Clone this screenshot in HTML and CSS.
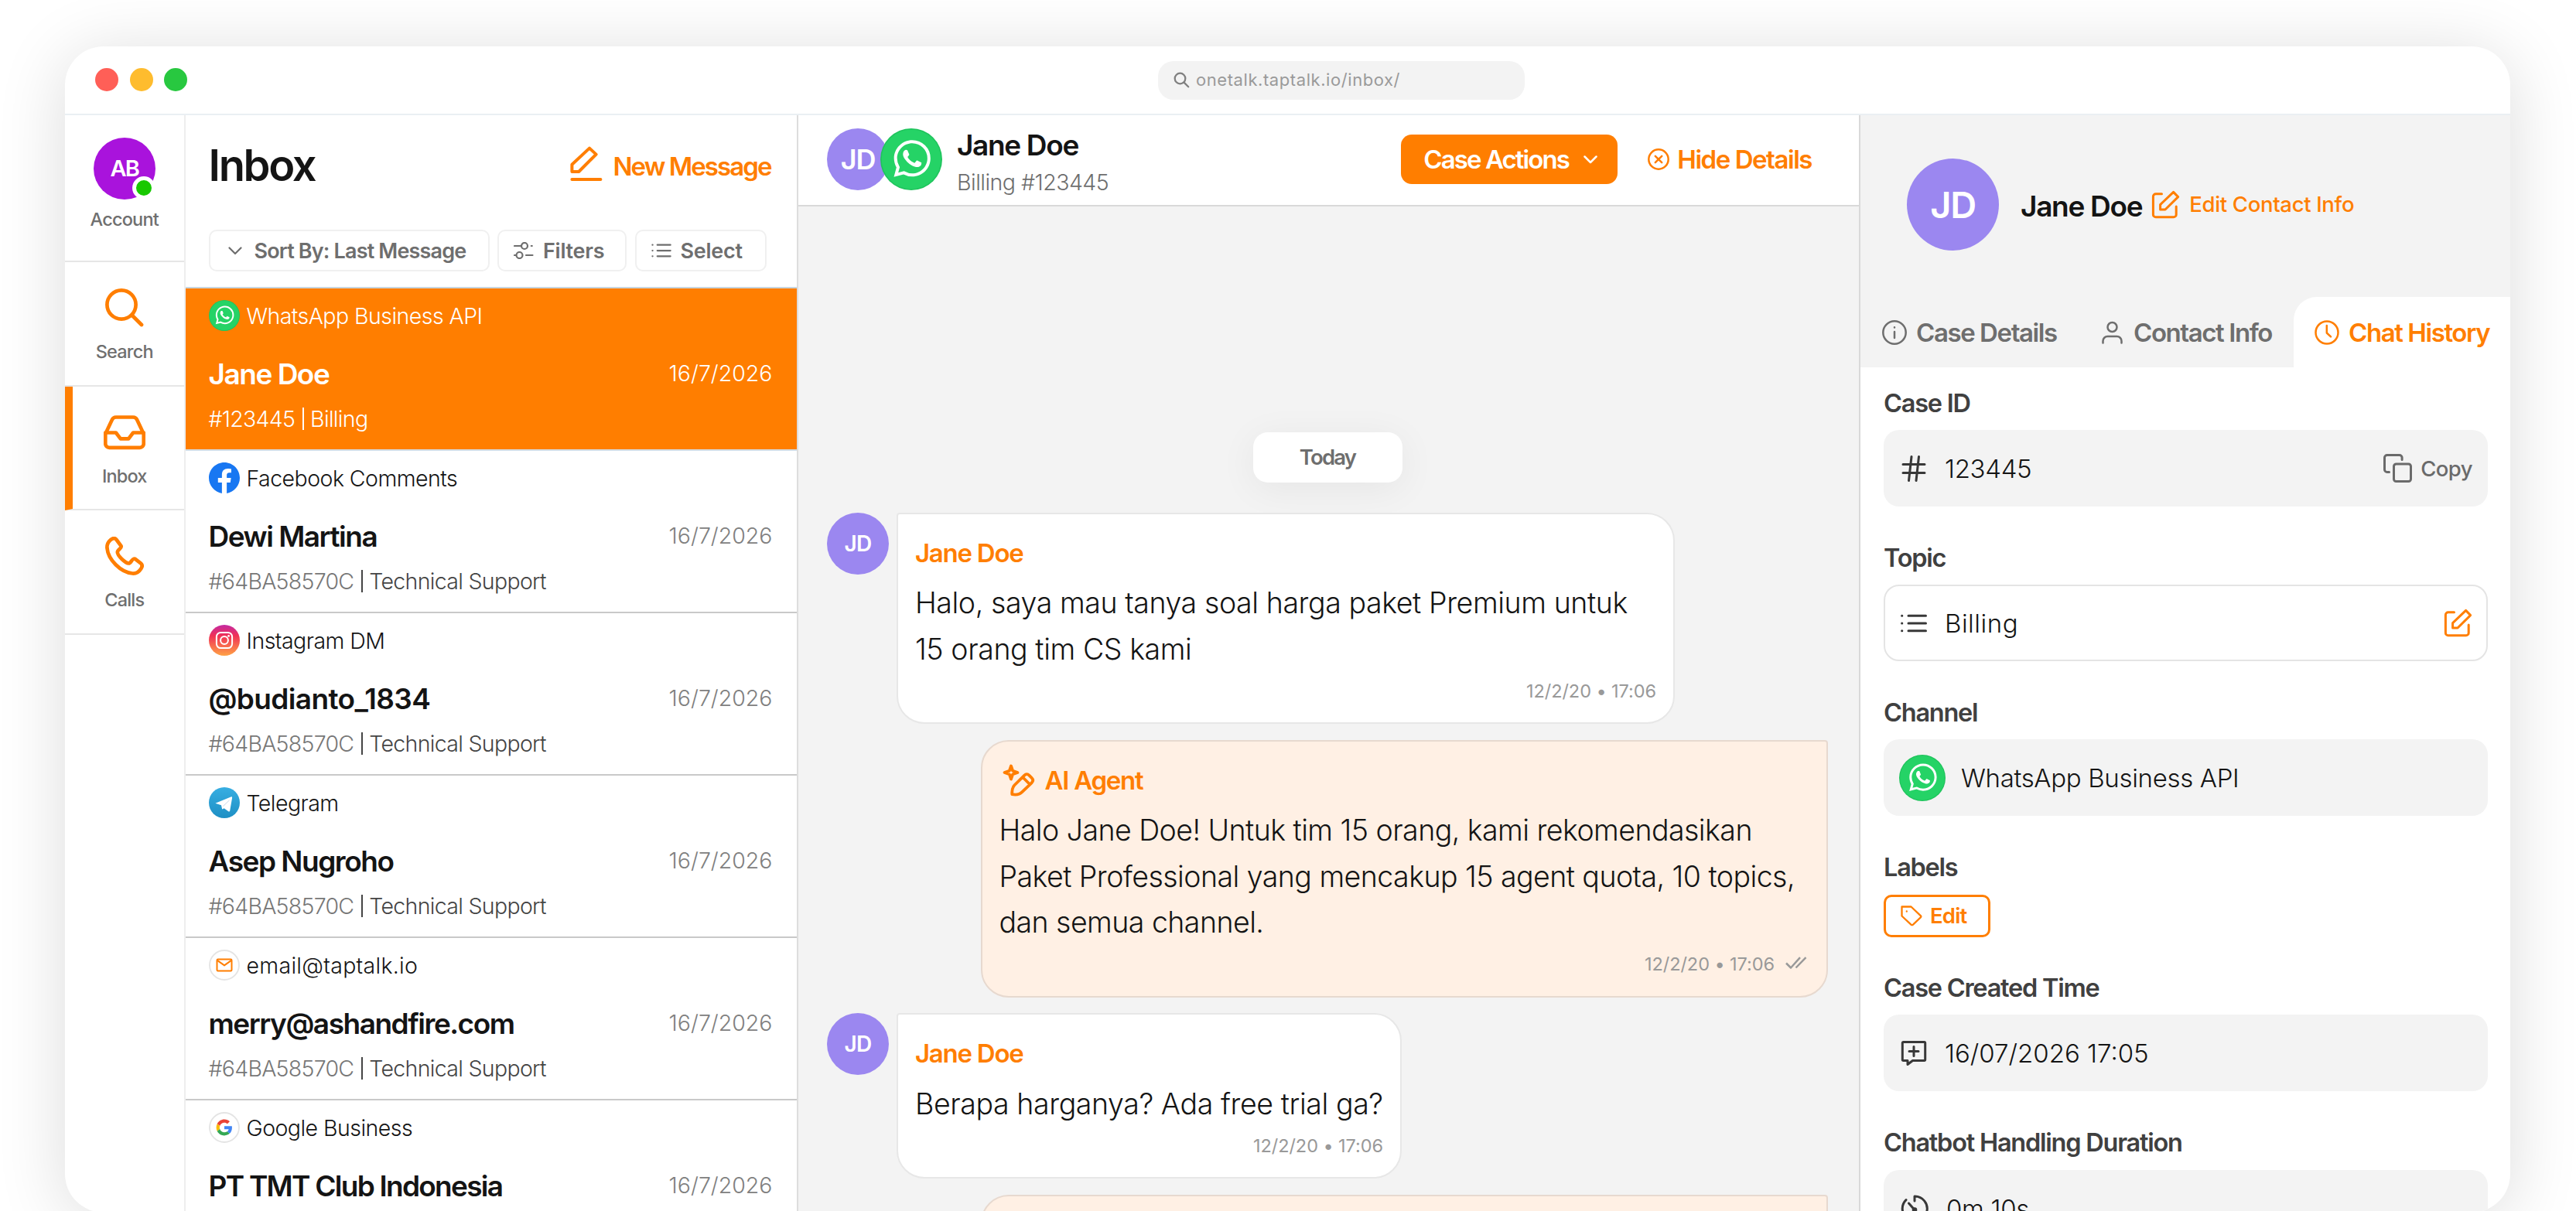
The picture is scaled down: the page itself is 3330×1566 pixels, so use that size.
FILE: index.html
```html
<!DOCTYPE html>
<html lang="en">
  <head>
    <meta charset="utf-8" />
    <meta name="viewport" content="width=device-width, initial-scale=1.0" />
    <title>OneTalk Inbox</title>
    <link rel="stylesheet" href="styles.css">
  </head>

  <body>
    <!-- icon sprite -->
    <svg class="sprite" width="0" height="0">
      <defs>
        <linearGradient id="instaBg" x1="0" y1="0" x2="0" y2="1">
          <stop offset="0" stop-color="#c32aa3" />
          <stop offset="0.35" stop-color="#f03056" />
          <stop offset="1" stop-color="#ffa245" />
        </linearGradient>
        <linearGradient id="teleBg" x1="0" y1="0" x2="0" y2="1">
          <stop offset="0" stop-color="#37aee2" />
          <stop offset="1" stop-color="#1e8fc4" />
        </linearGradient>
      </defs>
      <symbol id="whatsapp" viewBox="0 0 40 40">
        <circle cx="20" cy="20" r="20" fill="#1fc35c" />
        <circle cx="20" cy="20" r="19.2" fill="#25d366" />
        <path transform="translate(8.7 7.6) scale(.99)" fill="#fff" d="M17.472 14.382c-.297-.149-1.758-.867-2.03-.967-.273-.099-.471-.148-.67.15-.197.297-.767.966-.94 1.164-.173.199-.347.223-.644.075-.297-.15-1.255-.463-2.39-1.475-.883-.788-1.48-1.761-1.653-2.059-.173-.297-.018-.458.13-.606.134-.133.298-.347.446-.52.149-.174.198-.298.298-.497.099-.198.05-.371-.025-.52-.075-.149-.669-1.612-.916-2.207-.242-.579-.487-.5-.669-.51-.173-.008-.371-.01-.57-.01-.198 0-.52.074-.792.372-.272.297-1.04 1.016-1.04 2.479 0 1.462 1.065 2.875 1.213 3.074.149.198 2.096 3.2 5.077 4.487.709.306 1.262.489 1.694.625.712.227 1.36.195 1.871.118.571-.085 1.758-.719 2.006-1.413.248-.694.248-1.289.173-1.413-.074-.124-.272-.198-.57-.347m-5.421 7.403h-.004a9.87 9.87 0 01-5.031-1.378l-.361-.214-3.741.982.998-3.648-.235-.374a9.86 9.86 0 01-1.51-5.26c.001-5.45 4.436-9.884 9.888-9.884 2.64 0 5.122 1.03 6.988 2.898a9.825 9.825 0 012.893 6.994c-.003 5.45-4.437 9.884-9.885 9.884m8.413-18.297A11.815 11.815 0 0012.05 0C5.495 0 .16 5.335.157 11.892c0 2.096.547 4.142 1.588 5.945L.057 24l6.305-1.654a11.882 11.882 0 005.683 1.448h.005c6.554 0 11.89-5.335 11.893-11.893a11.821 11.821 0 00-3.48-8.413z" />
      </symbol>
      <symbol id="facebook" viewBox="0 0 24 24">
        <path fill="#1877f2" d="M24 12.073c0-6.627-5.373-12-12-12s-12 5.373-12 12c0 5.99 4.388 10.954 10.125 11.854v-8.385H7.078v-3.47h3.047V9.43c0-3.007 1.792-4.669 4.533-4.669 1.312 0 2.686.235 2.686.235v2.953H15.83c-1.491 0-1.956.925-1.956 1.874v2.25h3.328l-.532 3.47h-2.796v8.385C19.612 23.027 24 18.062 24 12.073z" />
      </symbol>
      <symbol id="instagram" viewBox="0 0 40 40">
        <circle cx="20" cy="20" r="20" fill="url(#instaBg)" />
        <rect x="9.9" y="9.9" width="20.2" height="20.2" rx="5.5" fill="none" stroke="#fff" stroke-width="2" />
        <circle cx="20" cy="20" r="4.9" fill="none" stroke="#fff" stroke-width="2" />
        <circle cx="25.6" cy="14.4" r="1.4" fill="#fff" />
      </symbol>
      <symbol id="telegram" viewBox="0 0 40 40">
        <circle cx="20" cy="20" r="20" fill="url(#teleBg)" />
        <path fill="#fff" d="M8.4 20.8 28.4 12.4q2-.7 1.7 1.3L27.2 30.4q-.4 1.8-2 .8l-5.5-3.9-2.5 1.2-1.2-5.2z" />
        <path d="M18.4 24.6 26.5 16.8" stroke="#c8daea" stroke-width="1" />
      </symbol>
      <symbol id="email" viewBox="0 0 40 40">
        <circle cx="20" cy="20" r="19" fill="#fff" stroke="#e4e4e4" stroke-width="1.8" />
        <g fill="none" stroke="#ff7e00" stroke-width="2" stroke-linejoin="round">
          <rect x="10.5" y="12.5" width="19" height="15" rx="1.2" />
          <path d="m10.5 13.6 9.5 6.8 9.5-6.8" />
        </g>
      </symbol>
      <symbol id="google" viewBox="0 0 40 40">
        <circle cx="20" cy="20" r="19" fill="#fff" stroke="#e4e4e4" stroke-width="1.8" />
        <g transform="translate(9.6 9.6) scale(.433)">
          <path fill="#EA4335" d="M24 9.5c3.54 0 6.71 1.22 9.21 3.6l6.85-6.85C35.9 2.38 30.47 0 24 0 14.62 0 6.51 5.38 2.56 13.22l7.98 6.19C12.43 13.72 17.74 9.5 24 9.5z" />
          <path fill="#4285F4" d="M46.98 24.55c0-1.57-.15-3.09-.38-4.55H24v9.02h12.94c-.58 2.96-2.26 5.48-4.78 7.18l7.73 6c4.51-4.18 7.09-10.36 7.09-17.65z" />
          <path fill="#FBBC05" d="M10.53 28.59c-.48-1.45-.76-2.99-.76-4.59s.27-3.14.76-4.59l-7.98-6.19C.92 16.46 0 20.12 0 24c0 3.88.92 7.54 2.56 10.78l7.97-6.19z" />
          <path fill="#34A853" d="M24 48c6.48 0 11.93-2.13 15.89-5.81l-7.73-6c-2.15 1.45-4.92 2.3-8.16 2.3-6.26 0-11.57-4.22-13.47-9.91l-7.98 6.19C6.51 42.62 14.62 48 24 48z" />
        </g>
      </symbol>
      <symbol id="edit" viewBox="0 0 37 37">
        <path d="M13.5 4.8H5.8a3.4 3.4 0 0 0-3.4 3.4v23.2a3.4 3.4 0 0 0 3.4 3.4h23a3.4 3.4 0 0 0 3.4-3.4V21" />
        <path d="m28.6 2.4 6 6.2L18 25h-6.4v-6.4z" />
      </symbol>
      <symbol id="list" viewBox="0 0 34 24">
        <path d="M10 2.2h22.5M10 12h22.5M10 21.8h22.5M1.6 2.2h.2M1.6 12h.2M1.6 21.8h.2" />
      </symbol>
      <symbol id="chevron" viewBox="0 0 18 11">
        <path d="m1.5 1.5 7.5 7.5 7.5-7.5" />
      </symbol>
    </svg>

    <div class="window">
      <div class="titlebar">
        <div class="dots">
          <span class="dot red"></span>
          <span class="dot yellow"></span>
          <span class="dot green"></span>
        </div>
        <div class="url">
          <svg class="line" width="21" height="21" viewBox="0 0 21 21"><circle cx="8.5" cy="8.5" r="6.8" /><path d="m13.6 13.6 5.6 5.6" /></svg>
          <span>onetalk.taptalk.io/inbox/</span>
        </div>
      </div>

      <div class="main">
        <nav class="sidebar">
          <div class="nav-item account">
            <div class="avatar me">AB<span class="online"></span></div>
            <span>Account</span>
          </div>
          <div class="nav-item">
            <svg class="line" width="50" height="50" viewBox="0 0 50 50"><circle cx="21" cy="21" r="18.6" /><path d="m34.5 34.5 12.5 12.5" /></svg>
            <span>Search</span>
          </div>
          <div class="nav-item active">
            <svg class="line" width="54" height="50" viewBox="0 -3 54.5 50">
              <path d="M2.3 24 11 5.5Q12.5 2.3 16 2.3h22.5q3.5 0 5 3.2L52.2 24v13a5 5 0 0 1-5 5H7.3a5 5 0 0 1-5-5z" />
              <path d="M2.3 22.5H16l6 8h10.5l6-8h13.7" />
            </svg>
            <span>Inbox</span>
          </div>
          <div class="nav-item">
            <svg class="line" width="50" height="50" viewBox="0 0 50 50">
              <path d="M6.8 4.2C10 1.4 13 1.5 14.6 4l6 8.2c1.3 2.2-4.8 4.8-4.8 7.8C16 25 26 34 30.5 34.5c2.6 0 4.7-7.2 8-5.8l7.4 5.6c2.3 2 2.3 4.2.5 6.9-3 4.8-6.5 6.7-11.2 6.3C20 46 3.8 30 2.4 14.5 2.2 9.800 4 6.600 6.800 4.200z" />
            </svg>
            <span>Calls</span>
          </div>
        </nav>

        <section class="inbox">
          <header class="inbox-head">
            <div class="inbox-title">
              <h1>Inbox</h1>
              <a class="new-message">
                <svg class="line" width="42" height="46" viewBox="0 0 42 46"><path d="m25 2.6 8.6 8L11.2 33H2.4v-9.2zM2.4 43h37" /></svg>
                New Message
              </a>
            </div>
            <div class="tools">
              <button class="tool sort"><svg class="line" width="18" height="11"><use href="#chevron" /></svg>Sort By: Last Message</button>
              <button class="tool filters">
                <svg class="line" width="26" height="22" viewBox="0 0 26 22"><circle cx="14" cy="5" r="4" /><circle cx="7.5" cy="17" r="4" /><path d="M1 5h8.5M22.8 5h1M1 17h2M16 17h8.5" /></svg>Filters
              </button>
              <button class="tool select"><svg class="line thick" width="26" height="18"><use href="#list" /></svg>Select</button>
            </div>
          </header>

          <div class="case selected">
            <div class="channel"><svg><use href="#whatsapp" /></svg>WhatsApp Business API</div>
            <div class="who"><b>Jane Doe</b><time>16/7/2026</time></div>
            <div class="meta"><span>#123445</span><i></i>Billing</div>
          </div>
          <div class="case">
            <div class="channel"><svg><use href="#facebook" /></svg>Facebook Comments</div>
            <div class="who"><b>Dewi Martina</b><time>16/7/2026</time></div>
            <div class="meta"><span>#64BA58570C</span><i></i>Technical Support</div>
          </div>
          <div class="case">
            <div class="channel"><svg><use href="#instagram" /></svg>Instagram DM</div>
            <div class="who"><b class="handle">@budianto_1834</b><time>16/7/2026</time></div>
            <div class="meta"><span>#64BA58570C</span><i></i>Technical Support</div>
          </div>
          <div class="case">
            <div class="channel"><svg><use href="#telegram" /></svg>Telegram</div>
            <div class="who"><b>Asep Nugroho</b><time>16/7/2026</time></div>
            <div class="meta"><span>#64BA58570C</span><i></i>Technical Support</div>
          </div>
          <div class="case">
            <div class="channel mail"><svg><use href="#email" /></svg>email@taptalk.io</div>
            <div class="who"><b>merry@ashandfire.com</b><time>16/7/2026</time></div>
            <div class="meta"><span>#64BA58570C</span><i></i>Technical Support</div>
          </div>
          <div class="case">
            <div class="channel"><svg><use href="#google" /></svg>Google Business</div>
            <div class="who"><b class="company">PT TMT Club Indonesia</b><time>16/7/2026</time></div>
          </div>
        </section>

        <section class="chat">
          <header class="chat-head">
            <div class="avatar jd">JD</div>
            <svg class="avatar-channel"><use href="#whatsapp" /></svg>
            <div class="chat-name">
              <b>Jane Doe</b>
              <span>Billing #123445</span>
            </div>
            <button class="case-actions">Case Actions<svg class="line" width="18" height="11"><use href="#chevron" /></svg></button>
            <a class="hide-details">
              <svg class="line" width="28" height="28" viewBox="0 0 28 28"><circle cx="14" cy="14" r="12.7" /><path d="m9.8 9.8 8.4 8.4M18.2 9.8l-8.4 8.4" /></svg>
              Hide Details
            </a>
          </header>

          <div class="messages">
            <div class="day">Today</div>

            <div class="row">
              <div class="avatar jd small">JD</div>
              <div class="bubble first">
                <div class="sender">Jane Doe</div>
                <p>Halo, saya mau tanya soal harga paket Premium untuk<br>15 orang tim CS kami</p>
                <div class="stamp">12/2/20 • 17:06</div>
              </div>
            </div>

            <div class="row mine">
              <div class="bubble agent">
                <div class="sender">
                  <svg class="line" width="42" height="42" viewBox="0 0 42 42">
                    <path d="m11 2.5 2.2 6.3 6.3 2.2-6.3 2.2L11 19.5l-2.2-6.3L2.5 11l6.3-2.2z" />
                    <path d="M12.3 39.2c-.4-5 .4-9 3.4-12.2l12.3-12.2c2.2-2.2 4.4-2.2 6.6 0l3 3c2.2 2.2 2.2 4.4 0 6.6L25.3 36.2c-3.2 3.2-8 4-13 3zM26.5 17.5l8.500 8.500" />
                  </svg>
                  AI Agent
                </div>
                <p>Halo Jane Doe! Untuk tim 15 orang, kami rekomendasikan<br>Paket Professional yang mencakup 15 agent quota, 10 topics,<br>dan semua channel.</p>
                <div class="stamp">12/2/20 • 17:06
                  <svg class="line" width="30" height="18" viewBox="0 0 30 18"><path d="m2 9.5 6 6L20 2.2M14.5 15.5 27.5 2.2" /></svg>
                </div>
              </div>
            </div>

            <div class="row">
              <div class="avatar jd small">JD</div>
              <div class="bubble third">
                <div class="sender">Jane Doe</div>
                <p>Berapa harganya? Ada free trial ga?</p>
                <div class="stamp">12/2/20 • 17:06</div>
              </div>
            </div>

            <div class="row mine">
              <div class="bubble agent next"></div>
            </div>
          </div>
        </section>

        <aside class="details">
          <div class="profile">
            <div class="avatar jd big">JD</div>
            <b>Jane Doe</b>
            <a class="edit-contact"><svg class="line" width="37" height="37"><use href="#edit" /></svg>Edit Contact Info</a>
          </div>
          <div class="tabs">
            <div class="tab">
              <svg class="line" width="32" height="32" viewBox="0 0 32 32"><circle cx="16" cy="16" r="14.7" /><path d="M16 15v8M16 9.3v.2" /></svg>
              Case Details
            </div>
            <div class="tab info">
              <svg class="line" width="27" height="30" viewBox="0 0 27 30"><circle cx="13.5" cy="8" r="6" /><path d="M1.5 28.5V26a6 6 0 0 1 6-6h12a6 6 0 0 1 6 6v2.5" /></svg>
              Contact Info
            </div>
            <div class="tab current">
              <svg class="line" width="32" height="32" viewBox="0 0 32 32"><circle cx="16" cy="16" r="14.5" /><path d="M15.8 7v9.5l5.2 4.8" /></svg>
              Chat History
            </div>
          </div>

          <div class="fields">
            <label>Case ID</label>
            <div class="field">
              <svg class="line" width="34" height="34" viewBox="0 0 34 34"><path d="M3 11.5h28M3 22.5h28M14 1.5l-3.5 31M23.5 1.5l-3.5 31" /></svg>
              <span>123445</span>
              <a class="copy">
                <svg class="line" width="37" height="37" viewBox="0 0 37 37"><rect x="13.5" y="13" width="22" height="22.5" rx="3" /><path d="M7.5 23.5H4.8a3.3 3.3 0 0 1-3.3-3.3V4.8a3.3 3.3 0 0 1 3.3-3.3h16a3.3 3.3 0 0 1 3.3 3.3V7.5" /></svg>
                Copy
              </a>
            </div>

            <label>Topic</label>
            <div class="field outline">
              <svg class="line" width="34" height="24"><use href="#list" /></svg>
              <span class="topic">Billing</span>
              <svg class="line edit" width="37" height="37"><use href="#edit" /></svg>
            </div>

            <label>Channel</label>
            <div class="field wa">
              <svg width="60" height="60"><use href="#whatsapp" /></svg>
              <span>WhatsApp Business API</span>
            </div>

            <label>Labels</label>
            <button class="edit-labels">
              <svg class="line" width="28" height="27" viewBox="0 0 28 27"><path d="M1.5 1.5h12L26 13.3a1.5 1.5 0 0 1 0 1.8L16 24.6a2 2 0 0 1-2.6 0L1.5 13.5zM7.8 7.5v.2" /></svg>
              Edit
            </button>

            <label>Case Created Time</label>
            <div class="field">
              <svg class="line" width="34" height="34" viewBox="0 0 34 34"><path d="M3.5 2.5h27a1.2 1.2 0 0 1 1.2 1.2v21.6a1.2 1.2 0 0 1-1.2 1.2H15.5L9 31.5v-5H3.5a1.2 1.2 0 0 1-1.2-1.2V3.7a1.2 1.2 0 0 1 1.2-1.2zM17 8.5v12M11 14.5h12" /></svg>
              <span class="created">16/07/2026 17:05</span>
            </div>

            <label>Chatbot Handling Duration</label>
            <div class="field">
              <svg class="line" width="36" height="36" viewBox="0 0 36 36"><path d="M18 8V2a16 16 0 1 1-11 4.6M10.5 11l7 8" /><circle cx="18" cy="19.5" r="1.8" /></svg>
              <span>0m 10s</span>
            </div>
          </div>
        </aside>
      </div>
    </div>
  </body>
</html>
```
FILE: styles.css
```css
* {
  box-sizing: border-box;
}

body {
  margin: 0;
  height: 1566px;
  overflow: hidden;
  background: #fff;
  font-family: Inter, "Liberation Sans", sans-serif;
  color: #141414;
}

button {
  font-family: inherit;
  background: none;
  padding: 0;
}

.sprite {
  position: absolute;
}

.line {
  flex: none;
  fill: none;
  stroke: currentColor;
  stroke-width: 3;
  stroke-linecap: round;
  stroke-linejoin: round;
}

.window {
  width: 3161px;
  height: 1508px;
  margin: 60px 0 0 84px;
  background: #fff;
  border-radius: 50px;
  box-shadow: 0 10px 90px rgba(0, 0, 0, 0.14);
}

/* browser bar */
.titlebar {
  height: 89px;
  border-bottom: 2px solid #eaeff3;
  display: grid;
  grid-template-columns: 1413px 474px;
  align-items: center;
}

.dots {
  display: flex;
  gap: 14.5px;
  padding: 0 0 1px 39px;
}

.dot {
  width: 30px;
  height: 30px;
  border-radius: 50%;
}

.red { background: #ff5f57; }
.yellow { background: #febc2e; }
.green { background: #28c840; }

.url {
  height: 50px;
  border-radius: 20px;
  background: #f3f3f3;
  display: flex;
  align-items: center;
  gap: 8px;
  padding: 0 0 1px 20px;
  font-size: 22px;
  letter-spacing: 0.026em;
  color: #9a9a9a;
}

.url svg {
  color: #808080;
  stroke-width: 2.3;
}

.main {
  display: grid;
  grid-template-columns: 155.5px 792px 1373.5px 840px;
  height: 1419px;
  overflow: hidden;
  border-radius: 0 0 50px 50px;
}

.avatar {
  flex: none;
  width: 80px;
  height: 80px;
  border-radius: 50%;
  display: flex;
  align-items: center;
  justify-content: center;
  color: #fff;
  font-weight: 600;
  letter-spacing: -0.03em;
}

.jd {
  background: #9b87f0;
  font-size: 36px;
}

.jd.small { font-size: 28px; }

.jd.big {
  width: 119px;
  height: 119px;
  font-size: 47px;
}

/* left navigation */
.sidebar {
  border-right: 2px solid #eee;
}

.nav-item {
  height: 160.5px;
  border-bottom: 2px solid #e6e6e6;
  display: flex;
  flex-direction: column;
  align-items: center;
  padding-top: 34px;
  gap: 17px;
  font-size: 23.5px;
  font-weight: 500;
  line-height: 30px;
  letter-spacing: -0.035em;
  color: #6f6f6f;
}

.nav-item svg {
  color: #ff7e00;
  stroke-width: 4.7;
}

.nav-item.account {
  height: 190px;
  padding-top: 29px;
  gap: 11px;
}

.nav-item.active {
  border-left: 10px solid #ff7e00;
  padding-right: 10px;
}

.me {
  position: relative;
  background: #a913dc;
  font-size: 29px;
  letter-spacing: -0.06em;
}

.online {
  position: absolute;
  right: 0;
  bottom: 0;
  width: 30px;
  height: 30px;
  border: 5px solid #fff;
  border-radius: 50%;
  background: #18c800;
}

/* case list */
.inbox {
  border-right: 2px solid #ddd;
  overflow: hidden;
}

.inbox-head {
  height: 224px;
  padding: 33px 33px 0 30px;
  border-bottom: 2px solid #c9d5de;
}

.inbox-title {
  display: flex;
  justify-content: space-between;
  align-items: center;
  height: 64px;
}

h1 {
  margin: 0;
  font-size: 56px;
  font-weight: 600;
  letter-spacing: -0.042em;
}

.new-message {
  display: flex;
  align-items: center;
  gap: 14px;
  padding-top: 1px;
  color: #ff7e00;
  font-size: 33px;
  font-weight: 600;
  letter-spacing: -0.059em;
}

.new-message svg {
  stroke-width: 4;
  margin-top: -5px;
}

.tools {
  display: flex;
  gap: 10.5px;
  margin-top: 51px;
}

.tool {
  height: 54px;
  border: 2px solid #f0f0f0;
  border-radius: 10px;
  display: flex;
  align-items: center;
  color: #6e6e6e;
  font-size: 27px;
  font-weight: 600;
  letter-spacing: -0.01em;
}

.tool svg {
  stroke-width: 2.2;
}

.tool svg.thick {
  stroke-width: 3;
}

.sort {
  width: 363px;
  padding-left: 23px;
  gap: 16px;
  letter-spacing: -0.031em;
}

.filters {
  width: 167px;
  padding-left: 19px;
  gap: 12px;
}

.select {
  width: 170px;
  padding-left: 19px;
  gap: 12px;
}

.case {
  height: 210px;
  padding: 15px 31px 0 30px;
  border-bottom: 2px solid #c9c9c9;
}

.channel {
  height: 40px;
  display: flex;
  align-items: center;
  gap: 9px;
  font-size: 28.5px;
  font-weight: 300;
  letter-spacing: -0.019em;
}

.channel.mail { letter-spacing: 0.01em; }

.channel svg {
  width: 40px;
  height: 40px;
}

.who {
  display: flex;
  justify-content: space-between;
  margin-top: 34px;
  line-height: 44px;
}

.who b {
  font-size: 37px;
  font-weight: 600;
  letter-spacing: -0.04em;
}

.who b.handle { letter-spacing: -0.017em; }
.who b.company { letter-spacing: -0.047em; }

.who time {
  line-height: 42px;
  font-size: 28.5px;
  font-weight: 300;
  color: #808080;
}

.meta {
  display: flex;
  align-items: center;
  margin-top: 18.5px;
  line-height: 34px;
  font-size: 28.5px;
  font-weight: 300;
  letter-spacing: -0.024em;
  color: #444;
}

.meta span {
  color: #777;
  letter-spacing: -0.026em;
}

.meta i {
  width: 2px;
  height: 29px;
  margin: 0 8px 0 10px;
  background: currentColor;
}

.case.selected {
  background: #ff7e00;
  border-color: #d3dce3;
}

.selected,
.selected time,
.selected .meta,
.selected .meta span {
  color: #fff;
}

/* conversation */
.chat {
  display: flex;
  flex-direction: column;
  background: #f3f3f3;
  border-right: 2px solid #d9d9d9;
  overflow: hidden;
}

.chat-head {
  flex: none;
  height: 118px;
  border-bottom: 2px solid #d9d9d9;
  background: #fff;
  display: flex;
  align-items: center;
  padding: 0 61px 3px 37.5px;
}

.avatar-channel {
  flex: none;
  width: 80px;
  height: 80px;
  margin-left: -11px;
  position: relative;
}

.chat-name {
  display: flex;
  flex-direction: column;
  gap: 8px;
  margin: 6px auto 0 19px;
}

.chat-name b {
  font-size: 37px;
  line-height: 46px;
  font-weight: 600;
  letter-spacing: -0.036em;
}

.chat-name span {
  font-size: 28.5px;
  line-height: 34px;
  font-weight: 300;
  letter-spacing: -0.018em;
  color: #6e6e6e;
}

.case-actions {
  width: 280px;
  height: 64px;
  border: 0;
  border-radius: 14px;
  background: #ff7e00;
  color: #fff;
  display: flex;
  align-items: center;
  padding: 1px 0 0 29px;
  gap: 19px;
  font-size: 33px;
  font-weight: 600;
  letter-spacing: -0.058em;
}

.case-actions svg {
  stroke-width: 2.5;
}

.hide-details {
  display: flex;
  align-items: center;
  gap: 10px;
  margin-left: 39px;
  color: #ff7e00;
  font-size: 33px;
  font-weight: 600;
  letter-spacing: -0.044em;
}

.hide-details svg {
  stroke-width: 2.5;
}

.messages {
  display: flex;
  flex-direction: column;
  gap: 20.7px;
  padding: 291.5px 40px 0 37.5px;
}

.day {
  align-self: center;
  width: 193px;
  height: 65px;
  margin-bottom: 19px;
  border-radius: 19px;
  background: #fff;
  box-shadow: 0 8px 50px rgba(0, 0, 0, 0.06);
  text-align: center;
  line-height: 65px;
  font-size: 27.5px;
  font-weight: 600;
  letter-spacing: -0.065em;
  color: #6e6e6e;
}

.row {
  display: flex;
  gap: 10px;
}

.row.mine {
  justify-content: flex-end;
}

.bubble {
  border: 2px solid #e7e7e7;
  border-radius: 4px 36px 36px 36px;
  background: #fff;
  padding: 28px 22px 24px 22px;
}

.bubble.first { width: 1006px; }
.bubble.third { width: 653px; }

.bubble.agent {
  width: 1095.5px;
  border-color: #e7d9cf;
  border-radius: 36px 4px 36px 36px;
  background: #fff0e4;
}

.bubble.next {
  height: 300px;
}

.sender {
  display: flex;
  align-items: center;
  gap: 13px;
  height: 44px;
  color: #ff7e00;
  font-size: 33px;
  font-weight: 600;
  letter-spacing: -0.038em;
}

.sender svg {
  margin-left: 4px;
  stroke-width: 3.8;
}

.bubble p {
  margin: 13.2px 0 7.5px;
  font-size: 37.5px;
  font-weight: 300;
  line-height: 59.3px;
  letter-spacing: -0.011em;
  white-space: nowrap;
}

.agent p { letter-spacing: -0.0145em; }

.stamp {
  display: flex;
  justify-content: flex-end;
  align-items: center;
  gap: 13px;
  height: 34px;
  font-size: 23.5px;
  letter-spacing: -0.003em;
  color: #999;
}

.stamp svg {
  margin: -4px 2px 0 0;
  stroke-width: 2.5;
  stroke-linecap: butt;
}

/* case details */
.profile {
  height: 234.5px;
  padding: 56px 0 0 60px;
  background: #f3f3f3;
  display: flex;
  align-items: flex-start;
  line-height: 119px;
}

.profile b {
  margin: 2px 0 0 28px;
  font-size: 37px;
  font-weight: 600;
  letter-spacing: -0.035em;
}

.edit-contact {
  display: flex;
  align-items: center;
  gap: 12px;
  margin-left: 12px;
  color: #ff7e00;
  font-size: 27.5px;
  font-weight: 500;
  letter-spacing: -0.012em;
}

.tabs {
  display: flex;
  background: #f3f3f3;
}

.tab {
  width: 284px;
  height: 91px;
  padding: 1px 0 0 28px;
  display: flex;
  align-items: center;
  gap: 12px;
  font-size: 33px;
  font-weight: 600;
  letter-spacing: -0.043em;
  color: #6e6e6e;
}

.tab svg {
  stroke-width: 2.5;
}

.tab.info {
  width: 276px;
  gap: 14px;
}

.tab.current {
  width: 280px;
  padding-left: 27px;
  background: #fff;
  border-top-left-radius: 30px;
  color: #ff7e00;
}

.fields {
  display: flex;
  flex-direction: column;
  padding: 27px 29px 0 30px;
}

.fields label {
  font-size: 32.5px;
  font-weight: 600;
  line-height: 40px;
  letter-spacing: -0.038em;
  color: #404040;
}

.field {
  height: 99px;
  margin: 14.3px 0 47px;
  padding: 1px 20px 0 22px;
  border-radius: 20px;
  background: #f3f3f3;
  display: flex;
  align-items: center;
  gap: 23px;
  font-size: 33px;
  font-weight: 300;
  letter-spacing: -0.01em;
}

.field svg {
  color: #383838;
}

.field .topic { letter-spacing: 0.015em; }
.field .created { letter-spacing: 0; }

.outline {
  border: 2.5px solid #e4e4e4;
  background: #fff;
  padding: 0 18px 0 20px;
}

.wa {
  padding-left: 20px;
  gap: 20px;
}

.copy {
  display: flex;
  align-items: center;
  gap: 11px;
  margin-left: auto;
  color: #6a6a6a;
  font-size: 27.5px;
  font-weight: 500;
  letter-spacing: -0.02em;
}

.copy svg {
  color: #6a6a6a;
}

.field svg.edit {
  margin-left: auto;
  color: #ff7e00;
}

.edit-labels {
  width: 138px;
  height: 55px;
  margin: 14.3px 0 46.5px;
  border: 3px solid #ff7e00;
  border-radius: 10px;
  color: #ff7e00;
  display: flex;
  align-items: center;
  gap: 10px;
  padding-left: 19px;
  font-size: 27.5px;
  font-weight: 600;
  letter-spacing: -0.03em;
}

.edit-labels svg {
  stroke-width: 2.3;
}
```
